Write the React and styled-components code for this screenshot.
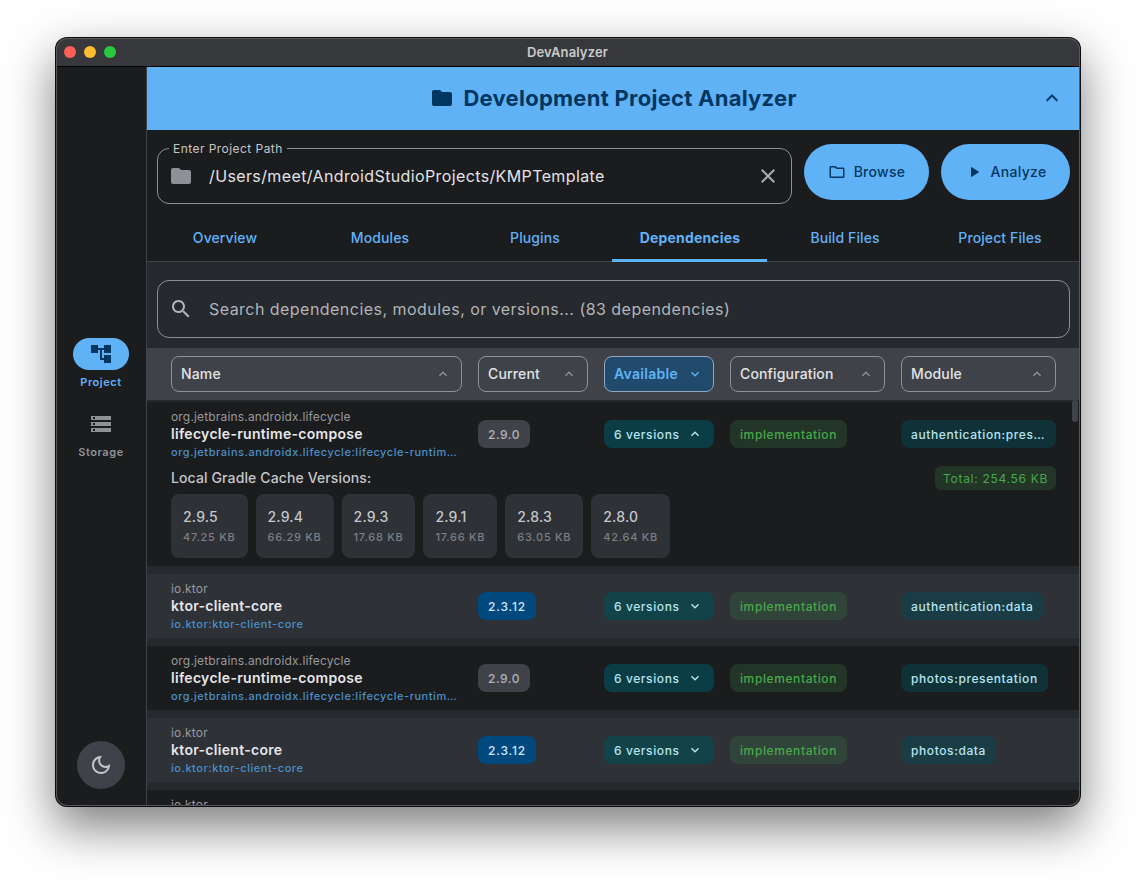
import React from 'react';
import styled, { createGlobalStyle } from 'styled-components';

const Global = createGlobalStyle`
  html, body { margin: 0; padding: 0; background: #fff; height: 100%; overflow: hidden; }
  * { box-sizing: border-box; }
  #root { font-family: Inter, "Liberation Sans", sans-serif; -webkit-font-smoothing: antialiased; }
`;

const Page = styled.div`
  width: 1136px; height: 880px; padding: 38px 56px 74px;
`;
const Win = styled.div`
  width: 1024px; height: 768px; border-radius: 11px; overflow: hidden; display: flex; flex-direction: column;
  background: #1b1c1e; position: relative;
  box-shadow: 0 0 0 1px #0b0b0c, 0 20px 48px 2px rgba(0,0,0,.5);
  &::after { content: ''; position: absolute; inset: 0; border-radius: 11px; border: 1px solid #55575b; border-top-color: #5a5c60; pointer-events: none; }
`;
const TitleBar = styled.div`
  height: 29px; flex: none; background: #36383c; border-bottom: 1px solid #000; position: relative;
  display: flex; align-items: center; justify-content: center;
  font-size: 13px; font-weight: 600; color: #c9cacc; padding: 0 1px 1px 0; letter-spacing: .13px;
`;
const Lights = styled.div`
  position: absolute; left: 8px; top: 8px; display: flex; gap: 8px;
`;
const Light = styled.span`
  width: 12px; height: 12px; border-radius: 50%; background: ${p => p.$c};
`;
const Body = styled.div`
  flex: 1; min-height: 0; display: flex;
`;
const Rail = styled.nav`
  width: 91px; flex: none; background: #1b1c1e; border-right: 1px solid #3f4147;
  display: flex; flex-direction: column; align-items: center; padding-bottom: 17px;
`;
const RailItems = styled.div`
  flex: 1; display: flex; flex-direction: column; justify-content: center; gap: 18px; padding-bottom: 10px;
`;
const RailItem = styled.div`
  display: flex; flex-direction: column; align-items: center; gap: 4px;
  font-size: 11px; line-height: 16px; font-weight: 600; letter-spacing: .55px;
  color: ${p => p.$on ? '#60b2f7' : '#8f9194'};
`;
const RailIcon = styled.div`
  width: 56px; height: 32px; border-radius: 16px; display: flex; align-items: center; justify-content: center;
  background: ${p => p.$on ? '#60b2f7' : 'transparent'}; color: ${p => p.$on ? '#00365f' : '#8f9194'};
`;
const ThemeBtn = styled.div`
  width: 48px; height: 48px; border-radius: 50%; background: #3f4249; color: #c4c6ca;
  display: flex; align-items: center; justify-content: center;
`;
const Main = styled.main`
  flex: 1; min-width: 0; display: flex; flex-direction: column;
`;
const Header = styled.header`
  height: 63px; flex: none; background: #60b2f7; color: #00365f; position: relative; padding-bottom: 1px;
  display: flex; align-items: center; justify-content: center; gap: 9px;
`;
const HeaderTitle = styled.h1`
  margin: 0; font-size: 22px; font-weight: 700; line-height: 28px; letter-spacing: .26px;
`;
const Collapse = styled.div`
  position: absolute; right: 16px; top: 19px; height: 24px; display: flex;
`;
const PathRow = styled.div`
  height: 88px; flex: none; display: flex; padding: 14px 10px 0; gap: 12px;
`;
const PathField = styled.div`
  position: relative; width: 635px; height: 56px; margin-top: 4px; border: 1px solid #8e9196; border-radius: 12px;
  display: flex; align-items: center; padding: 0 11px; color: #e2e2e6;
`;
const FloatLabel = styled.label`
  position: absolute; left: 11px; top: -8px; padding: 0 4px; background: #1b1c1e;
  font-size: 12px; line-height: 16px; color: #c4c6ca; letter-spacing: .45px;
`;
const FieldText = styled.div`
  flex: 1; margin-left: 16px; font-size: 16px; letter-spacing: .38px; line-height: 24px;
`;
const PillBtn = styled.button`
  width: ${p => p.$w}px; height: 56px; border: 0; border-radius: 28px; background: #60b2f7; color: #00365f;
  display: flex; align-items: center; justify-content: center; gap: 8px; padding: 0;
  font: 500 14px/20px Inter, sans-serif; letter-spacing: .3px;
`;
const Tabs = styled.div`
  height: 44px; flex: none; display: grid; grid-template-columns: repeat(6, 155px); border-bottom: 1px solid #3f4147;
`;
const Tab = styled.div`
  display: flex; align-items: center; justify-content: center; position: relative; padding: 0 0 4px 1px;
  font-size: 14px; font-weight: ${p => p.$on ? 700 : 500}; letter-spacing: ${p => p.$on ? '.16px' : '.1px'}; color: #60b2f7;
  ${p => p.$on && `&::after { content: ''; position: absolute; left: 0; right: 0; bottom: -1px; height: 3px; background: #60b2f7; }`}
`;
const SearchWrap = styled.div`
  flex: none; background: #26292d; padding: 18px 10px 10px;
`;
const SearchBox = styled.div`
  height: 58px; border: 1px solid #8e9196; border-radius: 12px; background: #26292d; display: flex; align-items: center;
  padding: 0 11px; color: #b2b4b8; gap: 16px; font-size: 16px; letter-spacing: .46px;
`;
const HeadRow = styled.div`
  flex: none; height: 52px; background: #3f4249; display: grid; grid-template-columns: 291px 110px 110px 155px 155px;
  column-gap: 16px; padding: 8px 24px; align-items: stretch;
`;
const SortBtn = styled.div`
  height: 36px; border-radius: 8px; border: 1px solid ${p => p.$on ? '#8fa9c2' : '#8e9196'};
  background: ${p => p.$on ? '#224a6c' : 'transparent'}; color: ${p => p.$on ? '#60b2f7' : '#e2e2e6'};
  display: flex; align-items: center; justify-content: space-between; padding: 0 10px 1px 9px;
  font-size: 14px; font-weight: ${p => p.$on ? 600 : 500}; letter-spacing: ${p => p.$on ? '.3px' : '.15px'};
  svg { color: ${p => p.$on ? '#60b2f7' : '#8e9196'}; }
`;
const ListArea = styled.div`
  flex: 1; min-height: 0; overflow: hidden; background: #26292d; position: relative; padding-top: 2px;
  display: flex; flex-direction: column; gap: 8px;
`;
const Thumb = styled.div`
  position: absolute; right: 2px; top: 0; width: 6px; height: 22px; border-radius: 3px; background: #3f4249;
`;
const RowCard = styled.section`
  flex: none; background: ${p => p.$alt ? '#2e3136' : '#1b1c1e'}; padding: 5px 24px;
`;
const RowGrid = styled.div`
  display: grid; grid-template-columns: 291px 110px 110px 155px 155px; column-gap: 16px; align-items: center; height: 54px;
`;
const NameCell = styled.div`
  min-width: 0; display: flex; flex-direction: column;
`;
const Group = styled.div`
  font-size: 12px; line-height: 18px; color: #97999d; letter-spacing: .17px; padding-top: 1px; margin-bottom: -1px;
`;
const Artifact = styled.div`
  font-size: 14px; line-height: 18px; font-weight: 600; color: #e6e6ea; letter-spacing: .3px;
`;
const Coord = styled.div`
  font-size: 11px; line-height: 18px; font-weight: 500; color: #4a90c9; letter-spacing: .55px;
  white-space: nowrap; overflow: hidden; text-overflow: ellipsis; padding-right: 4px;
`;
const Chip = styled.div`
  display: inline-flex; align-items: center; justify-content: space-between; height: 28px; border-radius: 8px; padding: 0 10px;
  font-size: 12px; font-weight: 500; letter-spacing: ${p => p.$ls || '.6px'}; white-space: nowrap; overflow: hidden;
  max-width: 100%; justify-self: start; background: ${p => p.$bg}; color: ${p => p.$fg};
  width: ${p => p.$full ? '100%' : 'auto'};
  svg { margin-right: 1px; }
`;
const Ellipsis = styled.span`
  overflow: hidden; text-overflow: ellipsis; white-space: nowrap;
`;
const CacheHead = styled.div`
  display: flex; justify-content: space-between; align-items: center; margin-top: 5px; height: 24px;
`;
const CacheTitle = styled.div`
  font-size: 14px; font-weight: 500; color: #c4c6ca; letter-spacing: .12px; padding-bottom: 1px;
`;
const TotalChip = styled.div`
  height: 24px; border-radius: 6px; background: #233527; color: #48a84c; padding: 0 8px; display: flex; align-items: center;
  font-size: 12px; letter-spacing: .7px;
`;
const Versions = styled.div`
  display: flex; gap: 8px; margin-top: 4px; margin-bottom: 3px;
`;
const VerCard = styled.div`
  height: 64px; border-radius: 8px; background: #2e3136; padding: 13px 12px;
`;
const VerNum = styled.div`
  font-size: 14px; line-height: 18px; font-weight: 500; color: #c4c6ca; letter-spacing: .2px; padding-top: 1px;
`;
const VerSize = styled.div`
  margin-top: 4px; font-size: 11px; line-height: 14px; font-weight: 500; color: #7d7f84; letter-spacing: .72px;
`;

const I = ({ d, s = 24, ...r }) => (
  <svg width={s} height={s} viewBox="0 0 24 24" fill="currentColor" style={{ flex: 'none' }} {...r}><path d={d} /></svg>
);
const P = {
  tree: 'M22 11V3h-7v3H9V3H2v8h7V8h2v10h4v3h7v-8h-7v3h-2V8h2v3z',
  storage: 'M2 20h20v-4H2v4zm2-3h2v2H4v-2zM2 4v4h20V4H2zm4 3H4V5h2v2zm-4 7h20v-4H2v4zm2-3h2v2H4v-2z',
  folder: 'M10 4H4c-1.1 0-1.99.9-1.99 2L2 18c0 1.1.9 2 2 2h16c1.1 0 2-.9 2-2V8c0-1.1-.9-2-2-2h-8l-2-2z',
  folderO: 'M9.17 6l2 2H20v10H4V6h5.17M10 4H4c-1.1 0-1.99.9-1.99 2L2 18c0 1.1.9 2 2 2h16c1.1 0 2-.9 2-2V8c0-1.1-.9-2-2-2h-8l-2-2z',
  play: 'M8 5v14l11-7z',
  close: 'M19 6.41L17.59 5 12 10.59 6.41 5 5 6.41 10.59 12 5 17.59 6.41 19 12 13.41 17.59 19 19 17.59 13.41 12z',
  up: 'M12 8l-6 6 1.41 1.41L12 10.83l4.59 4.58L18 14z',
  down: 'M16.59 8.59L12 13.17 7.41 8.59 6 10l6 6 6-6z',
  search: 'M15.5 14h-.79l-.28-.27C15.41 12.59 16 11.11 16 9.5 16 5.91 13.09 3 9.5 3S3 5.91 3 9.5 5.91 16 9.5 16c1.61 0 3.09-.59 4.23-1.57l.27.28v.79l5 4.99L20.49 19l-4.99-5zm-6 0C7.01 14 5 11.99 5 9.5S7.01 5 9.5 5 14 7.01 14 9.5 11.99 14 9.5 14z',
  moon: 'M9.37 5.51C9.19 6.15 9.1 6.82 9.1 7.5c0 4.08 3.32 7.4 7.4 7.4.68 0 1.35-.09 1.99-.27C17.45 17.19 14.93 19 12 19c-3.86 0-7-3.14-7-7 0-2.93 1.81-5.45 4.37-6.49zM12 3c-4.97 0-9 4.03-9 9s4.03 9 9 9 9-4.03 9-9c0-.46-.04-.92-.1-1.36-.98 1.37-2.58 2.26-4.4 2.26-2.98 0-5.4-2.42-5.4-5.4 0-1.81.89-3.42 2.26-4.4-.44-.06-.9-.1-1.36-.1z',
};

const lifecycle = { group: 'org.jetbrains.androidx.lifecycle', name: 'lifecycle-runtime-compose', cur: '2.9.0', known: false };
const ktor = { group: 'io.ktor', name: 'ktor-client-core', cur: '2.3.12', known: true };
const rows = [
  { ...lifecycle, mod: 'authentication:presentation', open: true },
  { ...ktor, mod: 'authentication:data' },
  { ...lifecycle, mod: 'photos:presentation' },
  { ...ktor, mod: 'photos:data' },
  { ...ktor, mod: 'photos:data' },
];
const versions = [
  ['2.9.5', '47.25 KB'], ['2.9.4', '66.29 KB'], ['2.9.3', '17.68 KB'],
  ['2.9.1', '17.66 KB'], ['2.8.3', '63.05 KB'], ['2.8.0', '42.64 KB'],
];
const tabs = ['Overview', 'Modules', 'Plugins', 'Dependencies', 'Build Files', 'Project Files'];
const cols = ['Name', 'Current', 'Available', 'Configuration', 'Module'];

const DepRow = ({ r, alt }) => (
  <RowCard $alt={alt}>
    <RowGrid>
      <NameCell>
        <Group>{r.group}</Group>
        <Artifact>{r.name}</Artifact>
        <Coord>{r.group}:{r.name}</Coord>
      </NameCell>
      <Chip $ls={r.known ? '.85px' : '.55px'} $bg={r.known ? '#00497f' : '#3f4249'} $fg={r.known ? '#cfe5ff' : '#b0b3b8'}>{r.cur}</Chip>
      <Chip $full $bg={alt ? '#124349' : '#0b3d47'} $fg="#b8e4f0">
        6 versions <I d={r.open ? P.up : P.down} s={16} />
      </Chip>
      <Chip $bg={alt ? '#30443a' : '#233527'} $fg="#48a84c">implementation</Chip>
      <Chip $bg={alt ? '#1a3c44' : '#0f3238'} $fg="#b8e4f0"><Ellipsis>{r.mod}</Ellipsis></Chip>
    </RowGrid>
    {r.open && (
      <>
        <CacheHead>
          <CacheTitle>Local Gradle Cache Versions:</CacheTitle>
          <TotalChip>Total: 254.56 KB</TotalChip>
        </CacheHead>
        <Versions>
          {versions.map(([v, s]) => (
            <VerCard key={v}><VerNum>{v}</VerNum><VerSize>{s}</VerSize></VerCard>
          ))}
        </Versions>
      </>
    )}
  </RowCard>
);

export default function App() {
  return (
    <Page>
      <Global />
      <Win>
        <TitleBar>
          <Lights>
            <Light $c="#ff5f57" /><Light $c="#febc2e" /><Light $c="#28c840" />
          </Lights>
          DevAnalyzer
        </TitleBar>
        <Body>
          <Rail>
            <RailItems>
              <RailItem $on><RailIcon $on><I d={P.tree} /></RailIcon>Project</RailItem>
              <RailItem><RailIcon><I d={P.storage} /></RailIcon>Storage</RailItem>
            </RailItems>
            <ThemeBtn><I d={P.moon} /></ThemeBtn>
          </Rail>
          <Main>
            <Header>
              <I d={P.folder} />
              <HeaderTitle>Development Project Analyzer</HeaderTitle>
              <Collapse><I d={P.up} /></Collapse>
            </Header>
            <PathRow>
              <PathField>
                <FloatLabel>Enter Project Path</FloatLabel>
                <I d={P.folder} style={{ color: '#8e9196', flex: 'none' }} />
                <FieldText>/Users/meet/AndroidStudioProjects/KMPTemplate</FieldText>
                <I d={P.close} style={{ color: '#a9abaf', flex: 'none' }} />
              </PathField>
              <PillBtn $w={125}><I d={P.folderO} s={18} />Browse</PillBtn>
              <PillBtn $w={129}><I d={P.play} s={18} />Analyze</PillBtn>
            </PathRow>
            <Tabs>
              {tabs.map(t => <Tab key={t} $on={t === 'Dependencies'}>{t}</Tab>)}
            </Tabs>
            <SearchWrap>
              <SearchBox>
                <I d={P.search} />
                Search dependencies, modules, or versions... (83 dependencies)
              </SearchBox>
            </SearchWrap>
            <HeadRow>
              {cols.map(c => (
                <SortBtn key={c} $on={c === 'Available'}>
                  {c}<I d={c === 'Available' ? P.down : P.up} s={16} />
                </SortBtn>
              ))}
            </HeadRow>
            <ListArea>
              {rows.map((r, i) => <DepRow key={i} r={r} alt={i % 2 === 1} />)}
              <Thumb />
            </ListArea>
          </Main>
        </Body>
      </Win>
    </Page>
  );
}
